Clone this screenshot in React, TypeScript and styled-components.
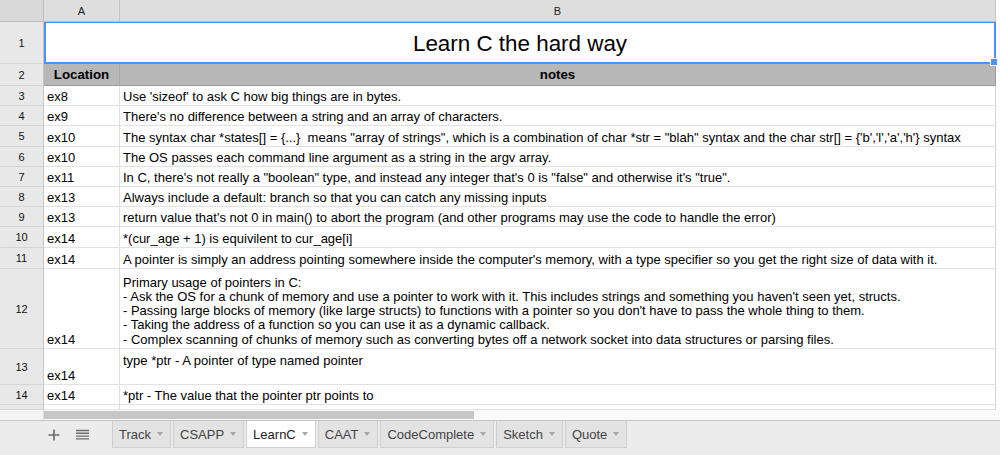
import React from "react";
import styled, { createGlobalStyle } from "styled-components";

const Global = createGlobalStyle`
  html, body { margin: 0; padding: 0; background: #fff; }
  body { font-family: "Liberation Sans", Arial, sans-serif; }
`;

const COLS = "44px 76px 876px 1fr";

const Page = styled.div`
  width: 1000px;
  height: 455px;
  display: flex;
  flex-direction: column;
  overflow: hidden;
  background: #fff;
`;

const Row = styled.div<{ $h: number }>`
  display: grid;
  grid-template-columns: ${COLS};
  height: ${(p) => p.$h}px;
  flex: none;
`;

const Corner = styled.div`
  background: #d9d9d9;
  border-right: 1px solid #bdbdbd;
  border-bottom: 1px solid #bdbdbd;
  box-sizing: border-box;
`;

const ColHead = styled.div`
  background: #dedede;
  border-right: 1px solid #c6c6c6;
  border-bottom: 1px solid #bdbdbd;
  box-sizing: border-box;
  display: flex;
  align-items: center;
  justify-content: center;
  font-size: 11px;
  color: #222;
`;

const Filler = styled.div<{ $bg?: string }>`
  background: ${(p) => p.$bg || "#fff"};
`;

const RowHead = styled.div`
  background: #e8e8e8;
  border-right: 1px solid #c6c6c6;
  border-bottom: 1px solid #d4d4d4;
  box-sizing: border-box;
  display: flex;
  align-items: center;
  justify-content: center;
  font-size: 11px;
  color: #111;
`;

const Cell = styled.div<{ $last?: boolean }>`
  border-right: 1px solid ${(p) => (p.$last ? "#d4d4d4" : "#e2e2e2")};
  border-bottom: 1px solid #e2e2e2;
  box-sizing: border-box;
  display: flex;
  flex-direction: column;
  justify-content: flex-end;
  padding: 0 3px 1px 3px;
  font-size: 13px;
  line-height: 14.3px;
  color: #000;
  white-space: pre;
  overflow: hidden;
`;

const Line = styled.div`
  min-height: 14.3px;
`;

const TitleCell = styled.div`
  grid-column: 2 / 4;
  position: relative;
  border: 2px solid #4d90fe;
  border-top-width: 1px;
  box-sizing: border-box;
  display: flex;
  align-items: center;
  justify-content: center;
  padding-top: 2px;
  font-size: 22.4px;
  color: #000;
`;

const Handle = styled.div`
  position: absolute;
  right: -4px;
  bottom: -4px;
  width: 6px;
  height: 6px;
  background: #4d90fe;
  border: 1px solid #fff;
`;

const HeadCell = styled.div<{ $last?: boolean }>`
  background: #b7b7b7;
  border-right: 1px solid ${(p) => (p.$last ? "#9c9c9c" : "#a8a8a8")};
  border-bottom: 1px solid #9c9c9c;
  box-sizing: border-box;
  display: flex;
  align-items: center;
  justify-content: center;
  font-size: 13.3px;
  font-weight: bold;
  color: #000;
`;

const ScrollRow = styled.div`
  display: grid;
  grid-template-columns: 44px 1fr;
  height: 10px;
  flex: none;
`;

const ScrollHead = styled.div`
  background: #f3f3f3;
  border-right: 1px solid #dcdcdc;
`;

const Track = styled.div`
  background: #fafafa;
  padding-top: 1px;
  box-sizing: border-box;
  display: flex;
`;

const Thumb = styled.div`
  width: 430px;
  height: 8px;
  background: #c6c6c6;
`;

const TabBar = styled.div`
  flex: 1;
  background: #ececec;
  border-top: 1px solid #c4c4c4;
  display: flex;
  align-items: flex-start;
  padding-left: 47px;
`;

const IconBtn = styled.div`
  width: 14px;
  height: 27px;
  display: flex;
  align-items: center;
  justify-content: center;
  margin-right: 14px;
`;

const Tabs = styled.div`
  display: flex;
  gap: 2px;
  margin-left: 9px;
`;

const Tab = styled.div<{ $active?: boolean }>`
  height: 27px;
  box-sizing: border-box;
  display: flex;
  align-items: center;
  gap: 6px;
  padding: 0 7px 0 6px;
  background: ${(p) => (p.$active ? "#fff" : "#e3e3e3")};
  border: 1px solid #cfcfcf;
  border-top: none;
  font-size: 13px;
  color: ${(p) => (p.$active ? "#222" : "#444")};
`;

const Arrow = () => (
  <svg width="6" height="4" viewBox="0 0 6 4">
    <path d="M0 0 L6 0 L3 4 Z" fill="#a8a8a8" />
  </svg>
);

const rows: { n: number; a: string; b: string[]; h: number }[] = [
  { n: 3, a: "ex8", b: ["Use 'sizeof' to ask C how big things are in bytes."], h: 20 },
  { n: 4, a: "ex9", b: ["There's no difference between a string and an array of characters."], h: 20 },
  {
    n: 5,
    a: "ex10",
    b: [
      "The syntax char *states[] = {...}  means \"array of strings\", which is a combination of char *str = \"blah\" syntax and the char str[] = {'b','l','a','h'} syntax",
    ],
    h: 21,
  },
  { n: 6, a: "ex10", b: ["The OS passes each command line argument as a string in the argv array."], h: 20 },
  {
    n: 7,
    a: "ex11",
    b: [
      "In C, there's not really a \"boolean\" type, and instead any integer that's 0 is \"false\" and otherwise it's \"true\".",
    ],
    h: 20,
  },
  { n: 8, a: "ex13", b: ["Always include a default: branch so that you can catch any missing inputs"], h: 20 },
  {
    n: 9,
    a: "ex13",
    b: ["return value that's not 0 in main() to abort the program (and other programs may use the code to handle the error)"],
    h: 20,
  },
  { n: 10, a: "ex14", b: ["*(cur_age + 1) is equivilent to cur_age[i]"], h: 21 },
  {
    n: 11,
    a: "ex14",
    b: [
      "A pointer is simply an address pointing somewhere inside the computer's memory, with a type specifier so you get the right size of data with it.",
    ],
    h: 21,
  },
  {
    n: 12,
    a: "ex14",
    b: [
      "Primary usage of pointers in C:",
      "- Ask the OS for a chunk of memory and use a pointer to work with it. This includes strings and something you haven't seen yet, structs.",
      "- Passing large blocks of memory (like large structs) to functions with a pointer so you don't have to pass the whole thing to them.",
      "- Taking the address of a function so you can use it as a dynamic callback.",
      "- Complex scanning of chunks of memory such as converting bytes off a network socket into data structures or parsing files.",
    ],
    h: 80,
  },
  { n: 13, a: "ex14", b: ["type *ptr - A pointer of type named pointer", ""], h: 36 },
  { n: 14, a: "ex14", b: ["*ptr - The value that the pointer ptr points to"], h: 20 },
];

export default function App() {
  return (
    <Page>
      <Global />
      <Row $h={22}>
        <Corner />
        <ColHead>A</ColHead>
        <ColHead>B</ColHead>
        <Filler $bg="#fff" />
      </Row>
      <Row $h={42}>
        <RowHead>1</RowHead>
        <TitleCell>
          Learn C the hard way
          <Handle />
        </TitleCell>
        <Filler />
      </Row>
      <Row $h={22}>
        <RowHead>2</RowHead>
        <HeadCell>Location</HeadCell>
        <HeadCell $last>notes</HeadCell>
        <Filler />
      </Row>
      {rows.map((r) => (
        <Row key={r.n} $h={r.h}>
          <RowHead>{r.n}</RowHead>
          <Cell>
            <Line>{r.a}</Line>
          </Cell>
          <Cell $last>
            {r.b.map((l, i) => (
              <Line key={i}>{l}</Line>
            ))}
          </Cell>
          <Filler />
        </Row>
      ))}
      <Row $h={5}>
        <RowHead />
        <Cell />
        <Cell $last />
        <Filler />
      </Row>
      <ScrollRow>
        <ScrollHead />
        <Track>
          <Thumb />
        </Track>
      </ScrollRow>
      <TabBar>
        <IconBtn>
          <svg width="12" height="12" viewBox="0 0 12 12">
            <path d="M6 0.5 V11.5 M0.5 6 H11.5" stroke="#6a6a6a" strokeWidth="1.6" />
          </svg>
        </IconBtn>
        <IconBtn>
          <svg width="13" height="12" viewBox="0 0 13 12">
            <path d="M0 1.5 H13 M0 4.3 H13 M0 7.1 H13 M0 9.9 H13" stroke="#6a6a6a" strokeWidth="1.4" />
          </svg>
        </IconBtn>
        <Tabs>
          {["Track", "CSAPP", "LearnC", "CAAT", "CodeComplete", "Sketch", "Quote"].map((t) => (
            <Tab key={t} $active={t === "LearnC"}>
              {t}
              <Arrow />
            </Tab>
          ))}
        </Tabs>
      </TabBar>
    </Page>
  );
}
